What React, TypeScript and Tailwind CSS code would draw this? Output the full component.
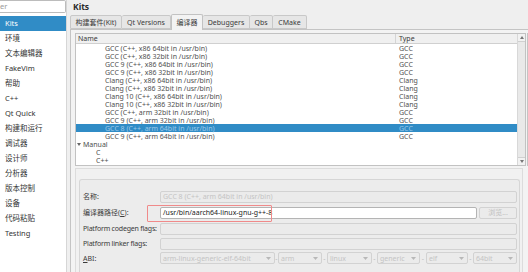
const sideItems = ['Kits', '环境', '文本编辑器', 'FakeVim', '帮助', 'C++', 'Qt Quick', '构建和运行', '调试器', '设计师', '分析器', '版本控制', '设备', '代码粘贴', 'Testing'];

const tabs = [
  { label: '构建套件(Kit)', w: 'w-[52px]' },
  { label: 'Qt Versions', w: 'w-[49px]' },
  { label: '编译器', w: 'w-[32px]', active: true },
  { label: 'Debuggers', w: 'w-[47px]' },
  { label: 'Qbs', w: 'w-[23px]' },
  { label: 'CMake', w: 'w-[34px]' },
];

const compilers = [
  ['GCC (C++, x86 64bit in /usr/bin)', 'GCC'],
  ['GCC (C++, x86 32bit in /usr/bin)', 'GCC'],
  ['GCC 9 (C++, x86 64bit in /usr/bin)', 'GCC'],
  ['GCC 9 (C++, x86 32bit in /usr/bin)', 'GCC'],
  ['Clang (C++, x86 64bit in /usr/bin)', 'Clang'],
  ['Clang (C++, x86 32bit in /usr/bin)', 'Clang'],
  ['Clang 10 (C++, x86 64bit in /usr/bin)', 'Clang'],
  ['Clang 10 (C++, x86 32bit in /usr/bin)', 'Clang'],
  ['GCC (C++, arm 32bit in /usr/bin)', 'GCC'],
  ['GCC 9 (C++, arm 32bit in /usr/bin)', 'GCC'],
  ['GCC 8 (C++, arm 64bit in /usr/bin)', 'GCC'],
  ['GCC 9 (C++, arm 64bit in /usr/bin)', 'GCC'],
];

const abi = [
  { v: 'arm-linux-generic-elf-64bit', w: 'w-[115px]' },
  { v: 'arm', w: 'w-[44px]' },
  { v: 'linux', w: 'w-[45px]' },
  { v: 'generic', w: 'w-[43px]' },
  { v: 'elf', w: 'w-[42px]' },
  { v: '64bit', w: 'w-[44px]' },
];

function Caret() {
  return (
    <svg width="5" height="3" viewBox="0 0 5 3" className="shrink-0">
      <path d="M0 0 L5 0 L2.5 3 Z" fill="#b8b8b8" />
    </svg>
  );
}

function DisabledField({ text, w }: { text?: string; w: string }) {
  return (
    <div className={`${w} h-[12px] shrink-0 border border-[#d2d2d2] bg-[#ebebeb] rounded-[2px] pl-[2px] flex items-center text-[#c4c4c4] whitespace-nowrap overflow-hidden`}>
      {text}
    </div>
  );
}

export default function App() {
  return (
    <div className="w-[528px] h-[272px] overflow-hidden flex bg-[#efefef] text-[7px] leading-none text-[#3a3a3a] font-['Noto_Sans','Noto_Sans_CJK_SC',sans-serif]">
      <aside className="w-[67px] shrink-0 bg-white border-r border-[#d6d6d6] flex flex-col">
        <div className="h-[13px] border border-l-0 border-[#bcbcbc] rounded-r-[2px] flex items-center text-[#9a9a9a] text-[7.5px]">er</div>
        <div className="mt-[3px] flex flex-col">
          {sideItems.map((s, i) => (
            <div key={s} className={`h-[15px] flex items-center pl-[5px] text-[7.5px] ${i === 0 ? 'bg-[#308cc6] text-white' : 'text-[#333]'}`}>
              {s}
            </div>
          ))}
        </div>
      </aside>

      <main className="flex-1 min-w-0 flex flex-col">
        <div className="h-[14px] pl-[6px] flex items-center font-bold text-[8.5px] text-[#2a2a2a]">Kits</div>
        <div className="h-[15px] pl-[3px] flex items-end">
          {tabs.map((t) =>
            t.active ? (
              <div key={t.label} className={`${t.w} h-[16px] mb-[-1px] relative z-10 bg-[#f3f3f3] border border-b-0 border-[#c2c2c2] rounded-t-[2px] flex items-center justify-center`}>
                {t.label}
              </div>
            ) : (
              <div key={t.label} className={`${t.w} h-[14px] bg-[#e6e6e6] border border-l-0 first:border-l border-[#c8c8c8] rounded-t-[2px] flex items-center justify-center`}>
                {t.label}
              </div>
            )
          )}
        </div>

        <div className="flex-1 ml-[3px] bg-[#f3f3f3] border-t border-l border-[#c4c4c4] pt-[3px] pl-[4px] flex flex-col">
          <div className="flex">
            <div className="w-[451px] h-[133px] border border-[#c2c2c2] bg-white flex">
              <div className="w-[441px] flex flex-col">
                <div className="h-[10px] flex border-b border-[#d0d0d0] bg-[#f0f0f0]">
                  <div className="w-[320px] pl-[2px] flex items-center border-r border-[#d4d4d4]">Name</div>
                  <div className="flex-1 pl-[3px] flex items-center">Type</div>
                </div>
                {compilers.map(([n, t], i) => (
                  <div key={n} className={`h-[8px] flex items-center ${i === 10 ? 'bg-[#308cc6] text-[#9ec8e8]' : 'text-[#505050]'}`}>
                    <div className="w-[320px] pl-[29px] whitespace-nowrap">{n}</div>
                    <div className="pl-[3px]">{t}</div>
                  </div>
                ))}
                <div className="h-[8px] flex items-center pl-[1px] text-[#505050]">
                  <svg width="4" height="3" viewBox="0 0 4 3" className="mr-[2px]">
                    <path d="M0 0 L4 0 L2 3 Z" fill="#666" />
                  </svg>
                  Manual
                </div>
                <div className="h-[8px] flex items-center pl-[20px] text-[#505050]">C</div>
                <div className="h-[8px] flex items-center pl-[20px] text-[#505050]">C++</div>
              </div>
              <div className="w-[8px] bg-[#e9e9e9] border-l border-[#d8d8d8] flex flex-col justify-between">
                <div className="h-[8px] bg-[#f2f2f2] border-b border-[#d0d0d0] flex items-center justify-center">
                  <svg width="4" height="3" viewBox="0 0 4 3"><path d="M0 3 L4 3 L2 0 Z" fill="#777" /></svg>
                </div>
                <div className="h-[8px] bg-[#f2f2f2] border-t border-[#d0d0d0] flex items-center justify-center">
                  <svg width="4" height="3" viewBox="0 0 4 3"><path d="M0 0 L4 0 L2 3 Z" fill="#777" /></svg>
                </div>
              </div>
            </div>
            <div className="w-[1px] ml-[1px] bg-[#c4c4c4]" />
          </div>

          <div className="mt-[2px] w-[448px] flex-1 border border-b-0 border-[#dcdcdc] bg-[#f1f1f1] pt-[10px] pl-[3px] flex flex-col">
            <div className="relative w-[441px] flex-1 border border-b-0 border-[#d6d6d6] rounded-t-[3px] bg-[#ececec] pt-[9px] pl-[3px] flex flex-col">
              <div className="h-[15px] flex items-center">
                <div className="w-[77px] shrink-0 whitespace-nowrap">名称:</div>
                <DisabledField w="w-[357px]" text="GCC 8 (C++, arm 64bit in /usr/bin)" />
              </div>
              <div className="h-[17px] flex items-center">
                <div className="w-[77px] shrink-0 whitespace-nowrap">编译器路径(<span className="underline">C</span>):</div>
                <div className="w-[317px] h-[12px] shrink-0 border border-[#b4b4b4] bg-white rounded-[2px] pl-[2px] flex items-center text-[#222] whitespace-nowrap">/usr/bin/aarch64-linux-gnu-g++-8</div>
                <div className="ml-[2px] w-[38px] h-[12px] shrink-0 border border-[#d2d2d2] bg-[#ebebeb] rounded-[2px] flex items-center justify-center text-[#c0c0c0]">浏览...</div>
              </div>
              <div className="h-[15px] flex items-center">
                <div className="w-[77px] shrink-0 whitespace-nowrap tracking-[-0.2px]">Platform codegen flags:</div>
                <DisabledField w="w-[357px]" />
              </div>
              <div className="h-[15px] flex items-center">
                <div className="w-[77px] shrink-0 whitespace-nowrap tracking-[-0.2px]">Platform linker flags:</div>
                <DisabledField w="w-[357px]" />
              </div>
              <div className="h-[14px] flex items-center">
                <div className="w-[77px] shrink-0 whitespace-nowrap"><span className="underline">A</span>BI:</div>
                {abi.map((a, i) => (
                  <div key={a.v} className="flex items-center shrink-0">
                    {i > 0 && <div className={`${i === 1 ? 'w-[3px]' : i === 4 ? 'w-[6px]' : 'w-[5px]'} text-center text-[#bbb]`}>-</div>}
                    <div className={`${a.w} h-[12px] border border-[#d2d2d2] bg-[#ebebeb] rounded-[2px] pl-[2px] pr-[3px] flex items-center justify-between text-[#c4c4c4] whitespace-nowrap`}>
                      {a.v}
                      <Caret />
                    </div>
                  </div>
                ))}
              </div>
              <div className="absolute left-[67px] top-[25px] w-[125px] h-[17px] border-[1.5px] border-[#f08a8a] rounded-[1px]" />
            </div>
          </div>
        </div>
      </main>
    </div>
  );
}
